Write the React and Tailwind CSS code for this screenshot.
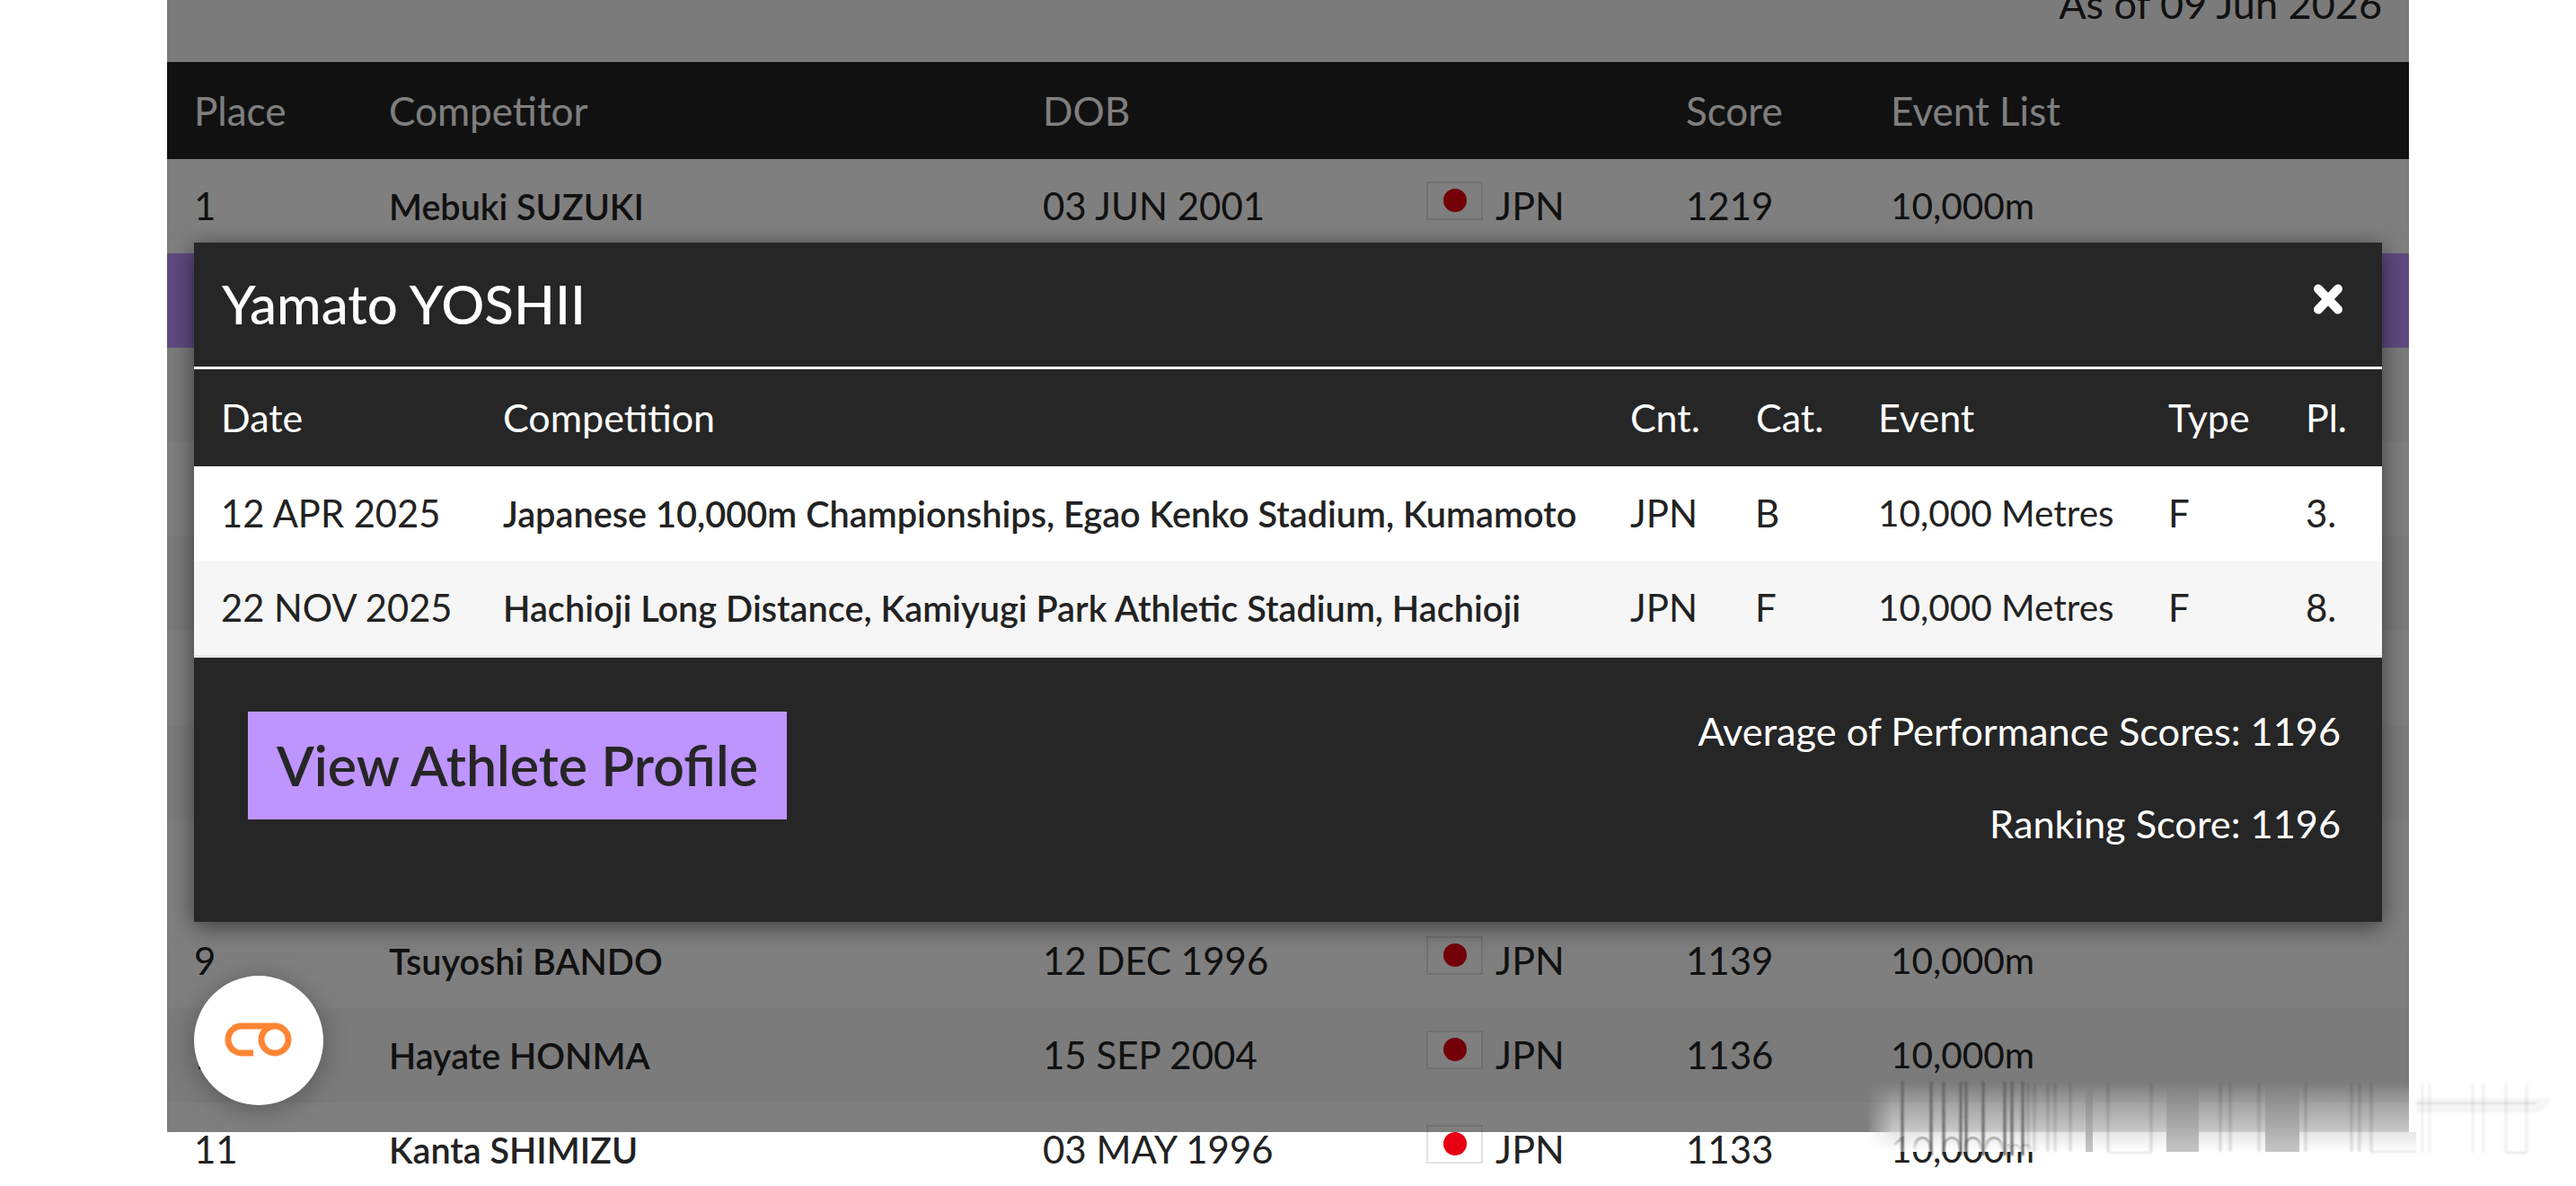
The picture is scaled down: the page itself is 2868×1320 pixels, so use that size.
const font = { fontFamily: 'Lato, sans-serif' };

const rows = [
  { place: '1', name: 'Mebuki SUZUKI', dob: '03 JUN 2001', score: '1219' },
  { bg: 'bg-[#be95ff]' },
  { bg: 'bg-[#f6f6f6]' },
  {},
  { bg: 'bg-[#f6f6f6]' },
  {},
  { bg: 'bg-[#f6f6f6]' },
  {},
  { place: '9', name: 'Tsuyoshi BANDO', dob: '12 DEC 1996', score: '1139' },
  { place: '10', name: 'Hayate HONMA', dob: '15 SEP 2004', score: '1136', bg: 'bg-[#f6f6f6]' },
  { place: '11', name: 'Kanta SHIMIZU', dob: '03 MAY 1996', score: '1133' },
];

const results = [
  { date: '12 APR 2025', comp: 'Japanese 10,000m Championships, Egao Kenko Stadium, Kumamoto', cat: 'B', pl: '3.', bg: 'bg-white' },
  { date: '22 NOV 2025', comp: 'Hachioji Long Distance, Kamiyugi Park Athletic Stadium, Hachioji', cat: 'F', pl: '8.', bg: 'bg-[#f6f6f6]' },
];

function Flag() {
  return (
    <svg width="63" height="43" viewBox="0 0 63 43" className="mb-[12px] block">
      <rect x="1" y="1" width="61" height="41" fill="#fff" stroke="#e2e2e2" strokeWidth="2" />
      <circle cx="32" cy="21" r="13" fill="#e60012" />
    </svg>
  );
}

function Logo() {
  return (
    <svg width="78" height="42" viewBox="0 0 78 42" fill="none" stroke="#ff8534" strokeWidth="7">
      <path d="M33 35H20a15 15 0 0 1 0-30h37a15 15 0 1 1-15 15a15 15 0 0 1 15-15" />
    </svg>
  );
}

// smeared strip at the bottom right of the capture
function Smear() {
  const lines = [2118, 2150, 2164, 2183, 2189, 2208, 2232, 2240, 2252];
  const faint = [2258, 2265, 2280, 2288, 2305, 2347, 2395, 2472, 2483, 2515, 2567, 2618, 2627, 2640];
  const pale = [2697, 2705, 2753, 2765, 2790, 2813];
  const solid = [[2322, 8], [2412, 36], [2522, 38]];
  return (
    <svg width="790" height="120" viewBox="2070 1190 790 120" className="absolute left-[2070px] top-[1190px]">
      <defs>
        <linearGradient id="fade" x1="0" y1="0" x2="0" y2="1">
          <stop offset="0" stopColor="#fff" stopOpacity="0" />
          <stop offset="0.33" stopColor="#fff" stopOpacity="0.3" />
          <stop offset="0.7" stopColor="#fff" stopOpacity="0.57" />
          <stop offset="1" stopColor="#fff" stopOpacity="1" />
        </linearGradient>
        <linearGradient id="haze" x1="0" y1="0" x2="0" y2="1">
          <stop offset="0" stopColor="#000" stopOpacity="0.1" />
          <stop offset="1" stopColor="#000" stopOpacity="0" />
        </linearGradient>
        <linearGradient id="bar" x1="0" y1="0" x2="0" y2="1">
          <stop offset="0" stopColor="#7c7c7c" />
          <stop offset="1" stopColor="#c6c6c6" />
        </linearGradient>
        <linearGradient id="ink" x1="0" y1="0" x2="0" y2="1">
          <stop offset="0" stopColor="#222" stopOpacity="0.35" />
          <stop offset="1" stopColor="#222" stopOpacity="0.85" />
        </linearGradient>
        <linearGradient id="side" gradientUnits="userSpaceOnUse" x1="2078" y1="0" x2="2108" y2="0">
          <stop offset="0" stopColor="#fff" stopOpacity="0" />
          <stop offset="1" stopColor="#fff" stopOpacity="1" />
        </linearGradient>
        <mask id="edge" maskUnits="userSpaceOnUse" x="2070" y="1190" width="790" height="120">
          <rect x="2070" y="1190" width="790" height="120" fill="url(#side)" />
        </mask>
        <filter id="soft">
          <feGaussianBlur stdDeviation="0.9" />
        </filter>
      </defs>
      <g mask="url(#edge)">
        <rect x="2078" y="1204" width="612" height="78" fill="url(#fade)" />
        <rect x="2078" y="1260" width="612" height="22" fill="url(#haze)" />
      </g>
      {solid.map(([x, w]) => (
        <rect key={x} x={x} y="1204" width={w} height="78" fill="url(#bar)" />
      ))}
      <g filter="url(#soft)">
        {faint.map((x) => (
          <rect key={x} x={x - 1.5} y="1206" width="3" height="76" fill="#000" fillOpacity="0.13" />
        ))}
        {pale.map((x) => (
          <rect key={x} x={x - 1.5} y="1206" width="3" height="77" fill="#000" fillOpacity="0.06" />
        ))}
        <path d="M2640 1282h50M2347 1283h48M2790 1283h23" stroke="#000" strokeOpacity="0.1" strokeWidth="2" />
        {lines.map((x) => (
          <rect key={x} x={x - 1.25} y="1204" width="2.5" height="82" fill="url(#ink)" />
        ))}
        <path d="M2690 1222h150l-4 10-12 6h-134" fill="#000" fillOpacity="0.04" />
        <path d="M2690 1227h135l-2 2h-133" fill="#000" fillOpacity="0.1" />
        <path d="M2080 1281h34l-6 8h-22z" fill="#fff" />
      </g>
    </svg>
  );
}

export default function App() {
  return (
    <div className="relative h-[1320px] w-[2868px] overflow-hidden bg-white text-[42px] text-[#222]" style={font}>
      <div className="relative ml-[186px] w-[2496px]">
        <div className="flex h-[69px] items-end justify-end bg-[#f6f6f6] pb-[41px] pr-[30px] text-[45px] leading-[48px]">
          As of 09 Jun 2026
        </div>

        <table className="w-full table-fixed border-collapse text-left">
          <colgroup>
            <col className="w-[218px]" />
            <col className="w-[728px]" />
            <col className="w-[426px]" />
            <col className="w-[290px]" />
            <col className="w-[228px]" />
            <col />
          </colgroup>
          <thead>
            <tr className="h-[108px] bg-[#222] text-[44px] text-white">
              <th className="pl-[30px] font-normal">Place</th>
              <th className="pl-[29px] font-normal">Competitor</th>
              <th className="pl-[29px] font-normal">DOB</th>
              <th className="pl-[30px] font-normal"></th>
              <th className="pl-[29px] font-normal">Score</th>
              <th className="pl-[29px] font-normal">Event List</th>
            </tr>
          </thead>
          <tbody>
            {rows.map((r, i) => (
              <tr key={i} className={`h-[105px] ${r.bg || 'bg-white'}`}>
                {r.place ? (
                  <>
                    <td className="pl-[30px]">{r.place}</td>
                    <td className="pl-[29px] text-[39.5px] font-semibold">{r.name}</td>
                    <td className="pl-[29px]">{r.dob}</td>
                    <td className="pl-[30px]">
                      <div className="flex items-center gap-[14px]">
                        <Flag />
                        <span className="text-[43px]">JPN</span>
                      </div>
                    </td>
                    <td className="pl-[29px]">{r.score}</td>
                    <td className="pl-[29px] text-[40.5px]">10,000m</td>
                  </>
                ) : (
                  <td colSpan={6} />
                )}
              </tr>
            ))}
          </tbody>
        </table>

        <div className="absolute inset-x-0 top-0 h-[1260px] bg-black/50" />

        <div className="absolute left-[30px] top-[270px] flex h-[756px] w-[2436px] flex-col bg-[#262626] text-white shadow-[0_5px_25px_rgba(0,0,0,0.55)]">
          <div className="flex h-[141px] shrink-0 items-center justify-between border-b-[3px] border-white pl-[31px] pr-[44px]">
            <h2 className="mb-[2px] text-[60px] font-medium leading-none">Yamato YOSHII</h2>
            <svg width="32" height="34" viewBox="0 0 32 34" className="mb-[12px]">
              <path d="M5 5.5l22 23M27 5.5l-22 23" stroke="#fff" strokeWidth="10" strokeLinecap="round" />
            </svg>
          </div>

          <table className="w-full table-fixed border-collapse text-left">
            <colgroup>
              <col className="w-[315px]" />
              <col className="w-[1255px]" />
              <col className="w-[139px]" />
              <col className="w-[137px]" />
              <col className="w-[322px]" />
              <col className="w-[153px]" />
              <col />
            </colgroup>
            <thead>
              <tr className="h-[108px] text-[43px]">
                <th className="pl-[30px] font-normal">Date</th>
                <th className="pl-[29px] font-normal">Competition</th>
                <th className="pl-[29px] font-normal">Cnt.</th>
                <th className="pl-[30px] font-normal">Cat.</th>
                <th className="pl-[29px] font-normal">Event</th>
                <th className="pl-[30px] font-normal">Type</th>
                <th className="pl-[30px] font-normal">Pl.</th>
              </tr>
            </thead>
            <tbody className="text-[#222]">
              {results.map((r) => (
                <tr key={r.date} className={`h-[105px] ${r.bg}`}>
                  <td className="pl-[30px] text-[41.7px]">{r.date}</td>
                  <td className="whitespace-nowrap pl-[29px] text-[39.7px] font-semibold">{r.comp}</td>
                  <td className="pl-[29px]">JPN</td>
                  <td className="pl-[29px]">{r.cat}</td>
                  <td className="pl-[29px] text-[40.5px]">10,000 Metres</td>
                  <td className="pl-[30px]">F</td>
                  <td className="pl-[30px]">{r.pl}</td>
                </tr>
              ))}
            </tbody>
          </table>
          <div className="h-[3px] shrink-0 bg-[#e6e6e6]" />

          <div className="flex flex-1 items-start justify-between pl-[60px] pr-[46px] pt-[60px]">
            <button type="button" className="flex h-[120px] w-[600px] items-center justify-center bg-[#be95ff] text-[60.8px] font-semibold text-[#262626]">
              View Athlete Profile
            </button>
            <div className="-mt-[3px] flex flex-col items-end gap-[55px] text-[43.3px] leading-[48px]">
              <span>Average of Performance Scores: 1196</span>
              <span>Ranking Score: 1196</span>
            </div>
          </div>
        </div>
      </div>

      <div className="absolute left-[216px] top-[1086px] flex h-[144px] w-[144px] items-center justify-center rounded-full bg-white shadow-[0_4px_30px_rgba(0,0,0,0.3)]">
        <Logo />
      </div>

      <Smear />
    </div>
  );
}
